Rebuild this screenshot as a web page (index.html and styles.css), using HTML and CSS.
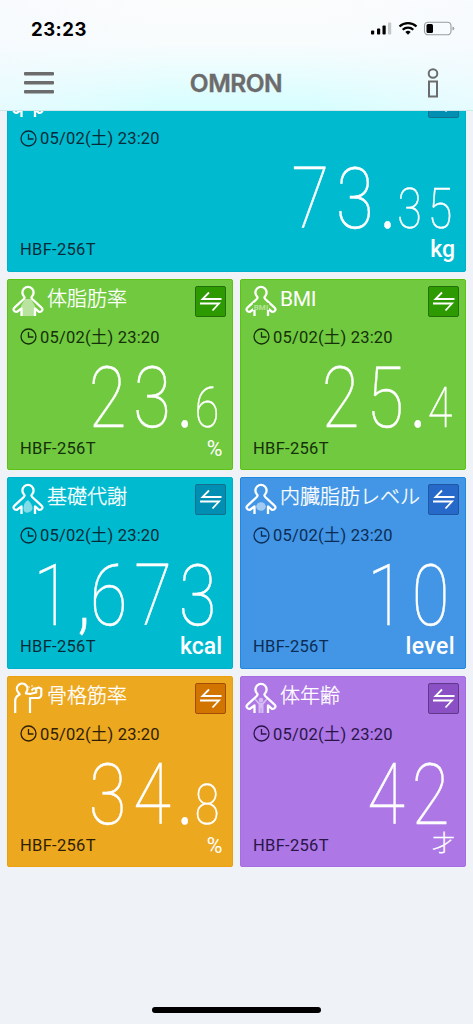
FILE: index.html
```html
<!DOCTYPE html>
<html lang="ja">
<head>
<meta charset="utf-8">
<title>OMRON</title>
<link rel="stylesheet" href="styles.css">
</head>
<body>
<svg width="0" height="0" class="defs">
  <defs>
    <symbol id="clock" viewBox="0 0 17 17"><circle cx="8.5" cy="8.5" r="7.5" fill="none" stroke="currentColor" stroke-width="1.3"/><path d="M8.5 4v5h5" fill="none" stroke="currentColor" stroke-width="1.3"/></symbol>
    <symbol id="swap" viewBox="0 0 29 29"><path d="M25.500 12H6.500l6.500-6.500M4 16.500h19L16.500 23.500" fill="none" stroke="#fff" stroke-width="1.800"/></symbol>
    <symbol id="body" viewBox="0 0 32 32"><path d="M9.500 31v-7.500l-4.500 3.300q-2.500.5-3.300-1.600-.5-1.500.8-2.500l9.300-8.700q1.500-1.500.1-2.700a5.600 5.600 0 1 1 8.200 0q-1.400 1.200.1 2.700l9.300 8.700q1.300 1 .8 2.500-.8 2.100-3.300 1.600l-4-3.300V31" fill="none" stroke="#fff" stroke-width="2.300" stroke-linejoin="round"/></symbol>
  </defs>
</svg>
<header class="top">
  <div class="status">
    <span class="time">23:23</span>
    <svg class="signals" width="86" height="16" viewBox="0 0 86 16">
      <rect x="1" y="9.500" width="3.200" height="4" rx=".8"/><rect x="7" y="7.500" width="3.200" height="6" rx=".8"/><rect x="12.500" y="4.500" width="3.200" height="9" rx=".8"/><rect x="18" y="1.500" width="3.200" height="12" rx=".8" fill="#c5c8ca"/>
      <g fill="none" stroke="#000" stroke-width="2.300"><path d="M29.500 5.500a12.300 12.300 0 0 1 17 0"/><path d="M32.700 8.700a7.600 7.600 0 0 1 10.600 0"/></g>
      <path d="M35.300 11.100a4 4 0 0 1 5.400 0L38 13.800z"/>
      <rect x="54.500" y="1.200" width="26.500" height="12.600" rx="3.600" fill="none" stroke="#999c9e" stroke-width="1.100"/><rect x="56.500" y="3" width="6.500" height="9" rx="1.500"/><path d="M82.500 5.500q1.800.5 1.800 2t-1.800 2z" fill="#999c9e"/>
    </svg>
  </div>
  <nav class="bar">
    <svg width="30" height="22" viewBox="0 0 30 22" fill="#6c6c6c"><rect width="30" height="3.600" rx="1"/><rect y="9" width="30" height="3.600" rx="1"/><rect y="18" width="30" height="3.600" rx="1"/></svg>
    <span class="brand">OMRON</span>
    <svg width="12" height="30" viewBox="0 0 12 30" fill="none" stroke="#6c6c6c" stroke-width="2"><circle cx="6" cy="5.500" r="4.300"/><rect x="2" y="13.500" width="8" height="15"/></svg>
  </nav>
</header>
<main class="grid">
  <section class="card cyan wide">
    <div class="head"><svg class="icon"><use href="#body"/></svg><h2></h2><button class="swap"><svg><use href="#swap"/></svg></button></div>
    <div class="date"><svg><use href="#clock"/></svg><span>05/02(土) 23:20</span></div>
    <div class="value"><span class="int">73</span><span class="sep">.</span><span class="frac">35</span></div>
    <div class="foot"><span class="model">HBF-256T</span><span class="unit">kg</span></div>
  </section>
  <section class="card green">
    <div class="head"><svg class="icon" viewBox="0 0 32 32"><path d="M9 31V21l4-7h6l4 7v10z" fill="#fff" opacity=".5"/><use href="#body"/></svg><h2>体脂肪率</h2><button class="swap"><svg><use href="#swap"/></svg></button></div>
    <div class="date"><svg><use href="#clock"/></svg><span>05/02(土) 23:20</span></div>
    <div class="value"><span class="int">23</span><span class="sep">.</span><span class="frac">6</span></div>
    <div class="foot"><span class="model">HBF-256T</span><span class="unit pct">%</span></div>
  </section>
  <section class="card green">
    <div class="head"><svg class="icon" viewBox="0 0 32 32"><use href="#body"/><rect x="8" y="18" width="16" height="7" fill="#70c93e"/><text x="16" y="24.500" text-anchor="middle" class="tag">BMI</text></svg><h2 class="latin">BMI</h2><button class="swap"><svg><use href="#swap"/></svg></button></div>
    <div class="date"><svg><use href="#clock"/></svg><span>05/02(土) 23:20</span></div>
    <div class="value"><span class="int">25</span><span class="sep">.</span><span class="frac">4</span></div>
    <div class="foot"><span class="model">HBF-256T</span></div>
  </section>
  <section class="card cyan">
    <div class="head"><svg class="icon" viewBox="0 0 32 32"><use href="#body"/><path d="M16 17q4.500 4.500 4.500 8t-4.500 4.500-4.500-4.500 4.500-8z" fill="#fff" opacity=".5"/></svg><h2>基礎代謝</h2><button class="swap"><svg><use href="#swap"/></svg></button></div>
    <div class="date"><svg><use href="#clock"/></svg><span>05/02(土) 23:20</span></div>
    <div class="value whole"><span class="int">1</span><span class="sep comma">,</span><span class="int">673</span></div>
    <div class="foot"><span class="model">HBF-256T</span><span class="unit">kcal</span></div>
  </section>
  <section class="card blue">
    <div class="head"><svg class="icon" viewBox="0 0 32 32"><use href="#body"/><ellipse cx="16" cy="23.500" rx="4.800" ry="4.300" fill="#fff" opacity=".5"/></svg><h2>内臓脂肪レベル</h2><button class="swap"><svg><use href="#swap"/></svg></button></div>
    <div class="date"><svg><use href="#clock"/></svg><span>05/02(土) 23:20</span></div>
    <div class="value whole"><span class="int">10</span></div>
    <div class="foot"><span class="model">HBF-256T</span><span class="unit wider">level</span></div>
  </section>
  <section class="card orange">
    <div class="head"><svg class="icon" viewBox="0 0 32 32" fill="none" stroke="#fff" stroke-width="2.200" stroke-linejoin="round"><path d="M3.200 31V19q0-4.500 4.500-6.500L6.300 10.500A5.300 5.300 0 1 1 14.700 9.500l-.8 2 5 .3 5.300-1.300V6.500l2.500-1 2.600 1.200V13q-.3 2.800-3.300 3H18v15"/><path d="M24 6.500h-2.500l-2 2" stroke-width="1.800"/><path d="M17.500 6l-1-2M20 5V2.800" stroke-width=".9"/></svg><h2>骨格筋率</h2><button class="swap"><svg><use href="#swap"/></svg></button></div>
    <div class="date"><svg><use href="#clock"/></svg><span>05/02(土) 23:20</span></div>
    <div class="value"><span class="int">34</span><span class="sep">.</span><span class="frac">8</span></div>
    <div class="foot"><span class="model">HBF-256T</span><span class="unit pct">%</span></div>
  </section>
  <section class="card purple">
    <div class="head"><svg class="icon" viewBox="0 0 32 32"><use href="#body"/><g fill="#fff" opacity=".5"><circle cx="16" cy="18" r="2.300"/><path d="M10.500 16.500l4 4h3l4-4 1 1-4 5V31h-2.200v-5h-.6v5h-2.200v-8.500l-4-5z"/></g></svg><h2>体年齢</h2><button class="swap"><svg><use href="#swap"/></svg></button></div>
    <div class="date"><svg><use href="#clock"/></svg><span>05/02(土) 23:20</span></div>
    <div class="value whole"><span class="int">42</span></div>
    <div class="foot"><span class="model">HBF-256T</span><span class="unit kanji">才</span></div>
  </section>
</main>
<div class="home"></div>
</body>
</html>
```

FILE: styles.css
```css
* { box-sizing: border-box; }
body { margin: 0; width: 473px; height: 1024px; overflow: hidden; position: relative; background: #eff3f7; font-family: Roboto, "Noto Sans CJK JP", sans-serif; }
.defs { position: absolute; }
.top { position: relative; z-index: 2; height: 111px; border-bottom: 1px solid #cfe6ea; background: linear-gradient(90deg, rgba(245,249,255,.5), rgba(245,249,255,0) 35%, rgba(245,249,255,0) 65%, rgba(245,249,255,.5)), linear-gradient(180deg, #fbfcfc 0%, #f8fcfd 40%, #d6feff 100%); }
.status { height: 58px; padding: 0 17px 0 31px; display: flex; justify-content: space-between; align-items: center; }
.time { font: 700 18.500px/20px Inter, sans-serif; letter-spacing: .5px; }
.bar { height: 50px; padding: 0 34px 0 24px; display: flex; justify-content: space-between; align-items: center; }
.brand { margin-right: 9px; font: 600 24.500px/24px Inter, sans-serif; color: #6c6c6c; letter-spacing: -.5px; -webkit-text-stroke: .4px #6c6c6c; }
.grid { margin-top: -31px; padding: 0 7px; display: grid; grid-template-columns: 226px 226px; grid-auto-rows: 191.500px; gap: 7px; }
.card { border-radius: 2px; border: 1px solid var(--edge); background: var(--fill); padding: 0 7px 0 12px; display: flex; flex-direction: column; color: #fff; }
.wide { grid-column: 1 / 3; }
.green { --fill: #70c93e; --edge: #5ec210; --btn: #2c9a00; --btn-edge: #236f0c; --ink: #15300b; }
.cyan { --fill: #00bbd0; --edge: #00afcb; --btn: #008fb2; --btn-edge: #126f8e; --ink: #062b38; }
.blue { --fill: #4296e5; --edge: #1f88e0; --btn: #2769c8; --btn-edge: #2057a4; --ink: #0c2c55; }
.orange { --fill: #eca81e; --edge: #eba010; --btn: #d27400; --btn-edge: #a34b08; --ink: #2f1d05; }
.purple { --fill: #ad77e6; --edge: #a56ee2; --btn: #8a50c4; --btn-edge: #5f3a8a; --ink: #2a1548; }
.head { height: 41px; margin: 0 -1px 0 -8px; padding-top: 5px; display: flex; align-items: flex-start; }
.icon { width: 32px; height: 32px; flex: none; }
.tag { font: 700 8px Roboto, sans-serif; fill: #b7e49e; }
.head h2 { flex: 1; margin: -1px 0 0 3px; font: 300 20px/28px "Noto Sans CJK JP", sans-serif; white-space: nowrap; -webkit-text-stroke: .3px #fff; }
.head h2.latin { margin-top: 0; font: 400 21px/29px Roboto, sans-serif; letter-spacing: -.3px; -webkit-text-stroke: 0; }
.swap { width: 31px; height: 31px; flex: none; margin-top: 1px; padding: 0; border: 1px solid var(--btn-edge); border-radius: 2px; background: var(--btn); }
.swap svg { width: 29px; height: 29px; display: block; }
.date { height: 32px; color: var(--ink); display: flex; align-items: center; gap: 3px; font-size: 16.500px; letter-spacing: .2px; white-space: nowrap; }
.date svg { width: 17px; height: 17px; }
.date span { line-height: 20px; margin-top: 2px; }
.value { height: 89px; line-height: 89px; display: flex; justify-content: flex-end; align-items: baseline; transform: scaleX(.8); transform-origin: right; font-weight: 100; white-space: nowrap; -webkit-text-stroke: .5px #fff; }
.whole { padding-right: 2px; }
.int { font-size: 86px; letter-spacing: 8.600px; }
.frac { font-size: 56px; letter-spacing: 7.300px; }
.sep { width: 21px; font-size: 56px; font-weight: 500; text-align: center; text-indent: -3px; }
.comma { font-size: 76px; font-weight: 300; text-indent: 0; }
.foot { height: 24px; margin-top: -5px; padding-right: 3px; display: flex; justify-content: space-between; align-items: flex-start; line-height: 24px; }
.model { font-size: 16.500px; letter-spacing: .3px; color: var(--ink); }
.unit { font-size: 23px; font-weight: 500; }
.wider { letter-spacing: .4px; }
.pct { margin-top: -1px; font-size: 22.500px; font-weight: 400; transform: scaleX(.95); transform-origin: right; }
.kanji { margin-top: -5px; font: 300 23px/24px "Noto Sans CJK JP", sans-serif; -webkit-text-stroke: .3px #fff; }
.home { position: absolute; left: 152px; top: 1007px; width: 169px; height: 6px; border-radius: 3px; background: #000; }
```
